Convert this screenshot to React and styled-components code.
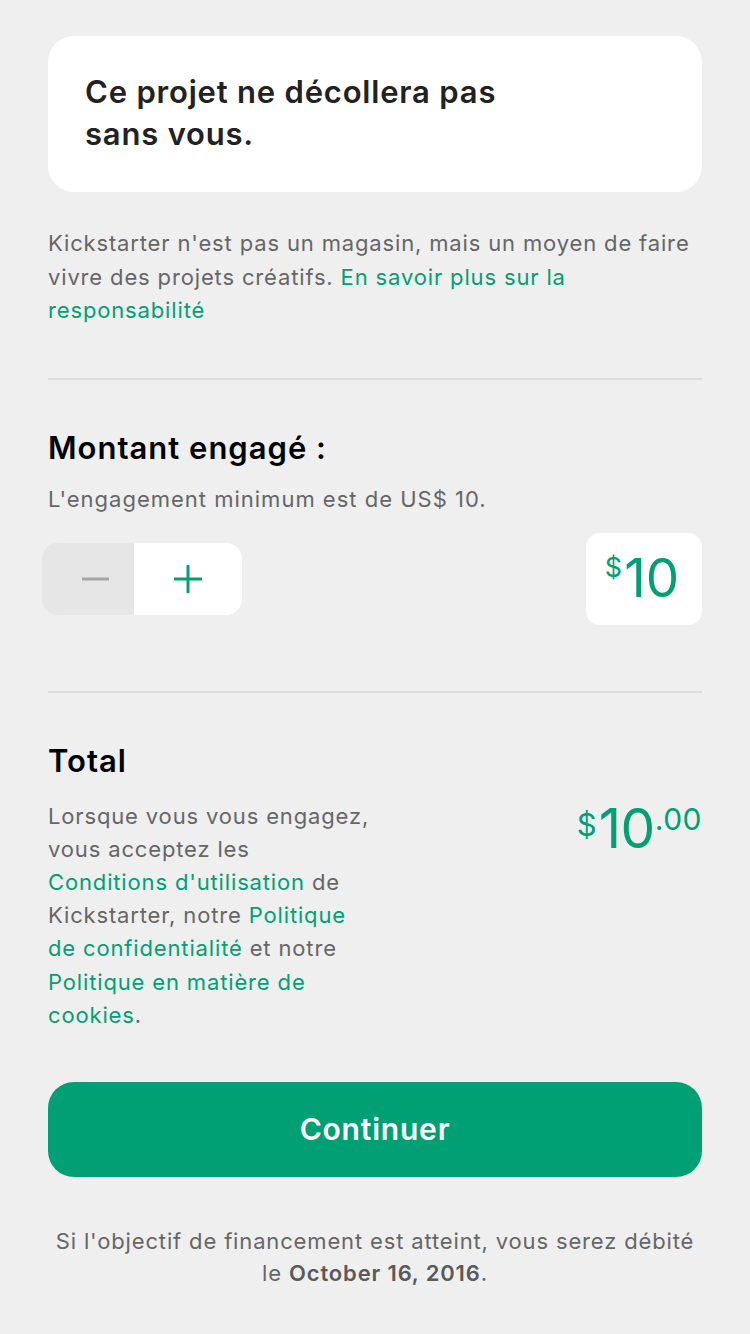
import React from "react";
import styled, { createGlobalStyle } from "styled-components";

const GREEN = "#00a074";

const GlobalStyle = createGlobalStyle`
  html, body {
    margin: 0;
    padding: 0;
    background: #efefef;
  }
  body {
    font-family: Inter, Roboto, "Noto Sans", sans-serif;
    -webkit-font-smoothing: antialiased;
  }
`;

function App() {
  return (
    <>
      <GlobalStyle />
      <Page>
        <Card>
          <CardTitle>Ce projet ne décollera pas<br />sans vous.</CardTitle>
        </Card>

        <Note>
          Kickstarter n'est pas un magasin, mais un moyen de faire vivre des projets créatifs.{" "}
          <Link>En savoir plus sur la responsabilité</Link>
        </Note>

        <Divider />

        <Section>
          <Heading>Montant engagé :</Heading>
          <Hint>L'engagement minimum est de US$ 10.</Hint>
          <PledgeRow>
            <Stepper>
              <StepButton disabled aria-label="moins">
                <svg width="27" height="28" viewBox="0 0 27 28">
                  <path d="M0 14h27" stroke="#a6a6a6" strokeWidth="3" />
                </svg>
              </StepButton>
              <StepButton active aria-label="plus">
                <svg width="30" height="30" viewBox="0 0 30 30">
                  <path d="M1 15h28M15 1v28" stroke={GREEN} strokeWidth="3" />
                </svg>
              </StepButton>
            </Stepper>
            <AmountBox>
              <Currency>$</Currency>
              <Amount>10</Amount>
            </AmountBox>
          </PledgeRow>
        </Section>

        <Divider />

        <TotalSection>
          <Heading>Total</Heading>
          <TotalRow>
            <Legal>
              Lorsque vous vous engagez, vous acceptez les{" "}
              <Link>Conditions d'utilisation</Link> de Kickstarter, notre{" "}
              <Link>Politique de confidentialité</Link> et notre{" "}
              <Link>Politique en matière de cookies</Link>.
            </Legal>
            <TotalAmount>
              <TotalCurrency>$</TotalCurrency>
              <TotalValue>10</TotalValue>
              <TotalCents>.00</TotalCents>
            </TotalAmount>
          </TotalRow>
        </TotalSection>

        <ContinueButton>Continuer</ContinueButton>

        <Footer>
          Si l'objectif de financement est atteint, vous serez débité
          <br />
          le <strong>October 16, 2016</strong>.
        </Footer>
      </Page>
    </>
  );
}

const Page = styled.main`
  width: 750px;
  min-height: 1334px;
  box-sizing: border-box;
  padding: 36px 48px 40px;
  display: flex;
  flex-direction: column;
`;

const Card = styled.div`
  background: #fff;
  border-radius: 26px;
  height: 156px;
  box-sizing: border-box;
  padding: 35px 37px;
`;

const CardTitle = styled.h1`
  margin: 0;
  font-size: 31px;
  line-height: 42px;
  font-weight: 600;
  letter-spacing: 0.8px;
  color: #222;
`;

const Note = styled.p`
  margin: 35px 0 50px;
  font-size: 22px;
  line-height: 33.5px;
  letter-spacing: 0.85px;
  color: #666;
`;

const Link = styled.span`
  color: ${GREEN};
`;

const Divider = styled.hr`
  border: 0;
  height: 2px;
  background: #dcdcdc;
  margin: 0;
`;

const Section = styled.section`
  padding: 48px 0 66px;
`;

const Heading = styled.h2`
  margin: 0;
  font-size: 31px;
  line-height: 40px;
  font-weight: 600;
  letter-spacing: 1px;
  color: #000;
`;

const Hint = styled.p`
  margin: 16px 0 0;
  font-size: 22px;
  line-height: 30px;
  letter-spacing: 1px;
  color: #666;
`;

const PledgeRow = styled.div`
  display: flex;
  justify-content: space-between;
  align-items: center;
  margin-top: 19px;
`;

const Stepper = styled.div`
  display: flex;
  margin-left: -6px;
  height: 72px;
  border-radius: 16px;
  overflow: hidden;
`;

const StepButton = styled.button`
  border: 0;
  margin: 0;
  box-sizing: border-box;
  padding: ${(p) => (p.active ? "0" : "0 0 0 14px")};
  width: ${(p) => (p.active ? "108px" : "92px")};
  height: 72px;
  display: flex;
  align-items: center;
  justify-content: center;
  background: ${(p) => (p.active ? "#fff" : "#e6e6e6")};
`;

const AmountBox = styled.div`
  width: 116px;
  height: 92px;
  box-sizing: border-box;
  padding: 0 4px 0 0;
  background: #fff;
  border-radius: 14px;
  display: flex;
  align-items: center;
  justify-content: center;
  color: ${GREEN};
  font-weight: 400;
`;

const Currency = styled.span`
  font-size: 27px;
  line-height: 1;
  align-self: flex-start;
  margin-top: 21px;
  margin-right: 2px;
`;

const Amount = styled.span`
  font-size: 53px;
  line-height: 1;
  letter-spacing: 0;
`;

const TotalSection = styled.section`
  padding: 48px 0 0;
`;

const TotalRow = styled.div`
  display: flex;
  justify-content: space-between;
  align-items: flex-start;
  margin-top: 19px;
`;

const Legal = styled.p`
  margin: 0;
  width: 326px;
  font-size: 22px;
  line-height: 33.2px;
  letter-spacing: 0.85px;
  color: #666;
`;

const TotalAmount = styled.div`
  display: flex;
  align-items: flex-start;
  color: ${GREEN};
  margin-top: 1px;
`;

const TotalCurrency = styled.span`
  font-size: 31px;
  line-height: 1;
  margin-top: 8px;
  margin-right: 2px;
`;

const TotalValue = styled.span`
  font-size: 55px;
  line-height: 1;
  letter-spacing: -0.5px;
`;

const TotalCents = styled.span`
  font-size: 30px;
  line-height: 1;
  margin-top: 3px;
  letter-spacing: 0.5px;
`;

const ContinueButton = styled.button`
  margin-top: 50px;
  height: 95px;
  border: 0;
  border-radius: 26px;
  background: ${GREEN};
  color: #fff;
  font-family: inherit;
  font-size: 30px;
  font-weight: 600;
  letter-spacing: 0.8px;
`;

const Footer = styled.p`
  margin: 48px 0 0;
  text-align: center;
  font-size: 22px;
  line-height: 32px;
  letter-spacing: 0.85px;
  color: #666;

  strong {
    font-weight: 600;
    color: #5a5a5a;
  }
`;

export default App;
